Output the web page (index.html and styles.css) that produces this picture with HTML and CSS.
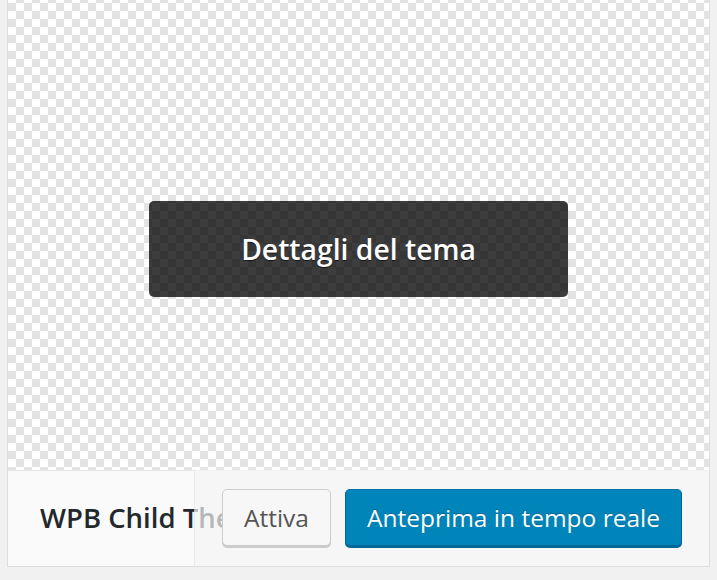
FILE: index.html
```html
<!DOCTYPE html>
<html lang="it">
<head>
    <meta charset="UTF-8">
    <meta name="viewport" content="width=device-width, initial-scale=1.0">
    <title>Temi</title>
    <link rel="stylesheet" href="styles.css">
</head>
<body>

<div class="theme">
    <div class="theme-screenshot"></div>
    <span class="more-details">Dettagli del tema</span>
    <div class="theme-footer">
        <h2 class="theme-name">WPB Child Theme</h2>
        <div class="theme-actions">
            <button class="button">Attiva</button>
            <button class="button button-primary">Anteprima in tempo reale</button>
        </div>
    </div>
</div>

</body>
</html>
```

FILE: styles.css
```css
body {
    margin: 0;
    background-color: #f1f1f1;
    font-family: "Open Sans", "Noto Sans", sans-serif;
    color: #23282d;
}
.theme {
    position: relative;
    width: 701px;
    margin-left: 7px;
    border: 1px solid #dedede;
    border-top: none;
    background: #fff;
}
.theme-screenshot {
    height: 470px;
    background: repeating-conic-gradient(#fff 0 25%, #e3e3e3 0 50%) 0 3px / 16px 16px;
}
.more-details {
    position: absolute;
    top: 201px;
    left: 141px;
    width: 419px;
    height: 96px;
    line-height: 96px;
    text-align: center;
    background: rgba(0, 0, 0, 0.76);
    border-radius: 5px;
    color: #fff;
    font-size: 28.3px;
    font-weight: 600;
    text-shadow: 0 1px 0 rgba(0, 0, 0, 0.6);
}
.theme-footer {
    position: relative;
    height: 96px;
    background: #fafafa;
    box-shadow: inset 0 1px 0 rgba(0, 0, 0, 0.08);
}
.theme-name {
    margin: 0;
    padding-left: 32px;
    line-height: 96px;
    font-size: 27.5px;
    font-weight: 600;
    white-space: nowrap;
    overflow: hidden;
}
.theme-actions {
    position: absolute;
    top: 0;
    right: 0;
    bottom: 0;
    display: flex;
    align-items: center;
    gap: 14px;
    padding: 0 27px 2px 27px;
    background: rgba(244, 244, 244, 0.7);
    border-left: 1px solid rgba(0, 0, 0, 0.05);
}
.button {
    height: 57px;
    padding: 0 21px;
    font-family: inherit;
    font-size: 24.5px;
    color: #555;
    background: #f7f7f7;
    border: 1px solid #ccc;
    border-radius: 5px;
    box-shadow: 0 2px 0 #ccc;
    cursor: pointer;
}
.button-primary {
    color: #fff;
    background: #0085ba;
    border-color: #0073aa #006799 #006799;
    box-shadow: 0 2px 0 #006799;
    text-shadow: 0 -1px 1px #006799;
}
```
